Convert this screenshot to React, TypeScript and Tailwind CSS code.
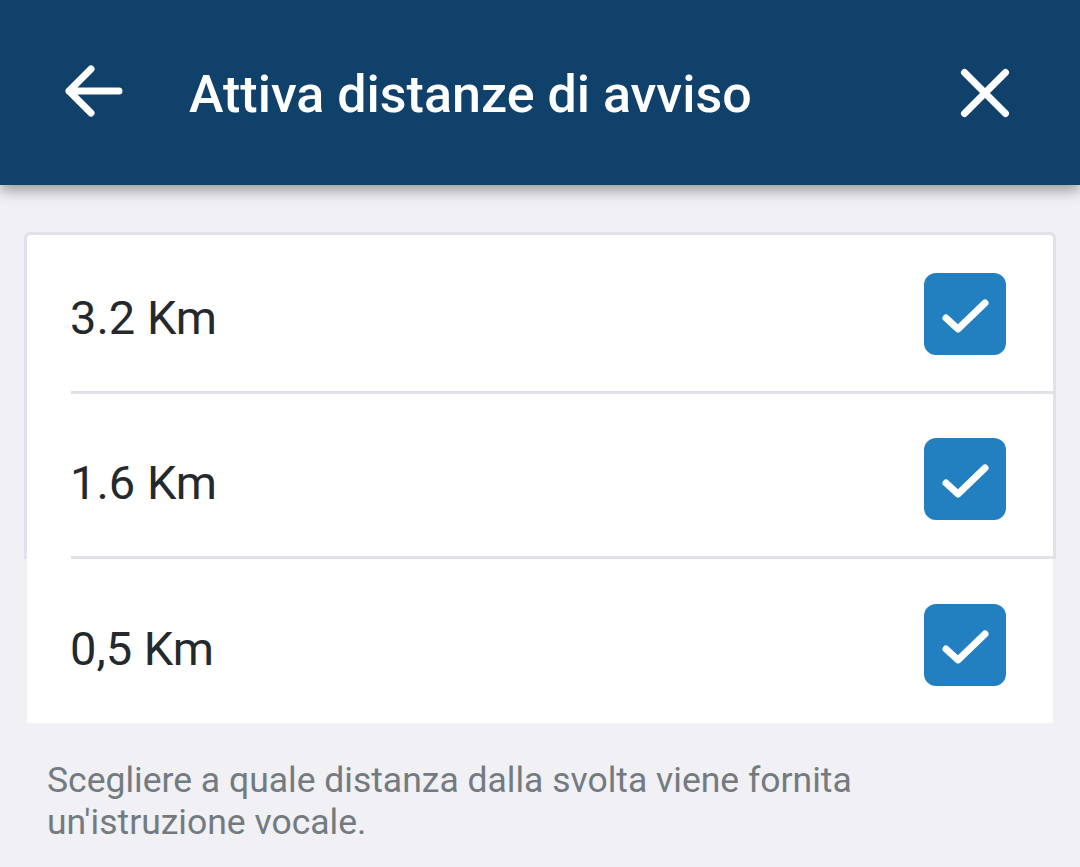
import { Fragment } from 'react'

const distances = [
  { label: '3.2 Km', checked: true },
  { label: '1.6 Km', checked: true },
  { label: '0,5 Km', checked: true },
]

function Checkbox({ checked }: { checked: boolean }) {
  return (
    <div className="w-[82px] h-[82px] rounded-[12px] bg-[#2280c0] shrink-0">
      {checked && (
        <svg width="82" height="82" viewBox="0 0 82 82" fill="none">
          <path
            d="M22 45 L34 56 L61 30"
            stroke="white"
            strokeWidth="7"
            strokeLinecap="round"
            strokeLinejoin="round"
          />
        </svg>
      )}
    </div>
  )
}

function Row({ label, checked, className }: { label: string; checked: boolean; className: string }) {
  return (
    <div className={`flex items-center justify-between pl-[43px] pr-[47px] ${className}`}>
      <span className="mt-[7px] text-[47px] leading-none text-[#23292d]">{label}</span>
      <Checkbox checked={checked} />
    </div>
  )
}

export default function App() {
  const font = { fontFamily: 'Roboto, "Noto Sans", sans-serif' }

  return (
    <div className="min-h-[867px] bg-[#f0f0f5] overflow-hidden" style={font}>
      {/* Header */}
      <div className="relative z-10 h-[185px] bg-[#0f416b] flex items-center shadow-[0_5px_14px_rgba(0,0,0,0.38)]">
        <svg className="ml-[62px] shrink-0" width="64" height="64" viewBox="0 0 64 64" fill="none">
          <path
            d="M7 30 H57 M29 8 L7 30 L29 52"
            stroke="white"
            strokeWidth="7"
            strokeLinecap="round"
            strokeLinejoin="round"
          />
        </svg>
        <h1 className="ml-[63px] mt-[5px] text-[52px] leading-none font-medium text-white">
          Attiva distanze di avviso
        </h1>
        <svg className="ml-auto mr-[67px] shrink-0" width="56" height="56" viewBox="0 0 56 56" fill="none">
          <path
            d="M7.5 7.5 L48.5 48.5 M48.5 7.5 L7.5 48.5"
            stroke="white"
            strokeWidth="7"
            strokeLinecap="round"
          />
        </svg>
      </div>

      {/* Distance list */}
      <div className="mt-[47px]">
        <div className="mx-[24px] border-[3px] border-b-0 border-[#e1e1e9] rounded-t-[6px] bg-white">
          {distances.slice(0, 2).map((d, i) => (
            <Fragment key={d.label}>
              <Row
                label={d.label}
                checked={d.checked}
                className={i === 0 ? 'h-[156px] pt-[2px]' : 'h-[162px] pt-[8px]'}
              />
              <div className="ml-[44px] h-[3px] bg-[#e1e1e9]" />
            </Fragment>
          ))}
        </div>
        <div className="mx-[27px] bg-white rounded-b-[4px]">
          <Row label={distances[2].label} checked={distances[2].checked} className="h-[164px] pt-[8px]" />
        </div>
      </div>

      {/* Hint */}
      <p className="mt-[36px] pl-[47px] pr-[140px] text-[35.5px] leading-[42px] text-[#737b80]">
        Scegliere a quale distanza dalla svolta viene fornita un'istruzione vocale.
      </p>
    </div>
  )
}
